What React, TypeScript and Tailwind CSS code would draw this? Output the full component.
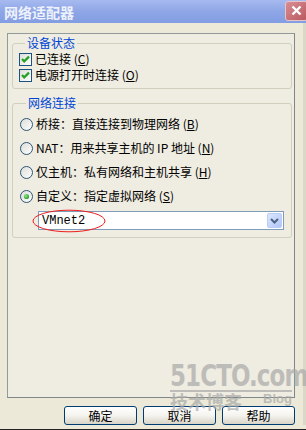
import React from 'react';

const Check = () => (
  <svg width="13" height="13" viewBox="0 0 13 13" className="shrink-0">
    <defs>
      <linearGradient id="cbg" x1="0" y1="0" x2="1" y2="1">
        <stop offset="0" stopColor="#dcdcd7" />
        <stop offset="1" stopColor="#ffffff" />
      </linearGradient>
    </defs>
    <rect x="0.5" y="0.5" width="12" height="12" fill="url(#cbg)" stroke="#1c5180" />
    <path d="M3 6 L5.2 8.4 L10 3.6" stroke="#21a121" strokeWidth="2.2" fill="none" />
  </svg>
);

const Radio = ({ checked }: { checked?: boolean }) => (
  <svg width="13" height="13" viewBox="0 0 13 13" className="shrink-0">
    <defs>
      <linearGradient id="rbg" x1="0" y1="0" x2="1" y2="1">
        <stop offset="0" stopColor="#dcdcd7" />
        <stop offset="1" stopColor="#ffffff" />
      </linearGradient>
      <radialGradient id="rdot" cx="0.35" cy="0.35" r="0.8">
        <stop offset="0" stopColor="#8ce28a" />
        <stop offset="1" stopColor="#1e961e" />
      </radialGradient>
    </defs>
    <circle cx="6.5" cy="6.5" r="6" fill="url(#rbg)" stroke="#2f5577" />
    {checked && <circle cx="6.5" cy="6.5" r="2.6" fill="url(#rdot)" />}
  </svg>
);

const Key = ({ k }: { k: string }) => (
  <span>
    {' ('}
    <span className="underline underline-offset-1">{k}</span>
    {')'}
  </span>
);

const Button = ({ children }: { children: React.ReactNode }) => (
  <div className="w-[73px] h-[19px] rounded-[3px] border border-[#003c74] bg-gradient-to-b from-[#ffffff] via-[#f4f3ee] to-[#d8d4c8] flex items-center justify-center text-[12px] leading-none text-black">
    {children}
  </div>
);

export default function App() {
  return (
    <div className="relative w-[306px] h-[430px] overflow-hidden bg-[#ece9d8] flex flex-col font-['Noto_Sans_CJK_SC',sans-serif] text-[12px] text-black">
      {/* title bar */}
      <div className="h-[23px] shrink-0 flex items-center justify-between bg-gradient-to-b from-[#a7baf0] via-[#8ea6e6] to-[#839de3]">
        <span className="pl-[4px] text-[14px] font-bold text-[#eef2fc] leading-none">网络适配器</span>
        <div className="mr-[-2px] mt-[-2px] w-[23px] h-[20px] rounded-[3px] border border-[#e8c4c8] bg-gradient-to-br from-[#d88d94] to-[#b9585f] flex items-center justify-center">
          <svg width="11" height="11" viewBox="0 0 11 11">
            <path d="M1.5 1.5 L9.5 9.5 M9.5 1.5 L1.5 9.5" stroke="#ffffff" strokeWidth="2.4" />
          </svg>
        </div>
      </div>

      <div className="flex-1 flex flex-col pl-[7px] pt-[10px] border-r-[3px] border-r-[#dcd8c8]">
        {/* tab panel */}
        <div className="w-[288px] h-[365px] border border-[#919b9c] border-b-[#7f8788] border-r-[#7f8788] bg-[#efece1] pl-[4px] pt-[2px]">
          <fieldset className="w-[280px] border border-[#d0d0bf] rounded-[3px] pl-[6px] pt-[1px] pb-[5px]">
            <legend className="ml-[6px] px-[2px] text-[12px] leading-[14px] text-[#0046d5]">设备状态</legend>
            <div className="h-[16px] flex items-center gap-[3px]">
              <Check />
              <span className="leading-none">已连接<Key k="C" /></span>
            </div>
            <div className="h-[16px] flex items-center gap-[3px]">
              <Check />
              <span className="leading-none">电源打开时连接<Key k="O" /></span>
            </div>
          </fieldset>

          <fieldset className="mt-[7px] w-[280px] border border-[#d0d0bf] rounded-[3px] pl-[7px] pt-[2px] pb-[7px]">
            <legend className="ml-[6px] px-[2px] text-[12px] leading-[14px] text-[#0046d5]">网络连接</legend>
            <div className="h-[24px] flex items-center gap-[3px]">
              <Radio />
              <span className="leading-none">桥接：直接连接到物理网络<Key k="B" /></span>
            </div>
            <div className="h-[24px] flex items-center gap-[3px]">
              <Radio />
              <span className="leading-none">NAT：用来共享主机的 IP 地址<Key k="N" /></span>
            </div>
            <div className="h-[24px] flex items-center gap-[3px]">
              <Radio />
              <span className="leading-none">仅主机：私有网络和主机共享<Key k="H" /></span>
            </div>
            <div className="h-[24px] flex items-center gap-[3px]">
              <Radio checked />
              <span className="leading-none">自定义：指定虚拟网络<Key k="S" /></span>
            </div>
            {/* combo box */}
            <div className="relative mt-[3px] ml-[18px] w-[246px] h-[19px] border border-[#7f9db9] bg-white flex items-center justify-between">
              <span className="pl-[3px] font-['Liberation_Mono',monospace] text-[12px] leading-none">VMnet2</span>
              <div className="mr-[1px] w-[15px] h-[15px] rounded-[2px] border border-[#b9cdf6] bg-gradient-to-br from-[#dce7fd] to-[#b0c6f7] flex items-center justify-center">
                <svg width="9" height="6" viewBox="0 0 9 6">
                  <path d="M1 1 L4.5 4.5 L8 1" stroke="#4d6185" strokeWidth="2" fill="none" />
                </svg>
              </div>
              <svg className="absolute left-[-7px] top-[-3px] pointer-events-none" width="74" height="24" viewBox="0 0 74 24">
                <ellipse cx="37" cy="12" rx="36" ry="10.8" fill="none" stroke="#ee1c1c" strokeWidth="1" />
              </svg>
            </div>
          </fieldset>
        </div>

        {/* buttons */}
        <div className="mt-[8px] pl-[57px] flex gap-[6px]">
          <Button>确定</Button>
          <Button>取消</Button>
          <Button>帮助</Button>
        </div>
      </div>

      <div className="h-[2px] shrink-0 mt-[4px] bg-[#222222]" />

      {/* watermark */}
      <div className="absolute left-[170px] top-[360px] w-[124px] flex flex-col items-start pointer-events-none opacity-70">
        <span className="origin-top-left scale-x-[0.92] scale-y-[1.2] font-['DejaVu_Sans',sans-serif] font-bold text-[25px] leading-[27px] tracking-[-1px] text-[#a9a9a9] whitespace-nowrap">51CTO.com</span>
        <div className="mt-[3px] w-[122px] h-[2px] bg-[#a9a9a9]" />
        <div className="w-[122px] flex items-start justify-between">
          <span className="text-[18px] leading-[18px] font-bold text-[#a9a9a9]">技术博客</span>
          <span className="font-['Liberation_Sans',sans-serif] text-[13px] leading-[14px] font-bold text-[#a9a9a9]">Blog</span>
        </div>
      </div>
    </div>
  );
}
